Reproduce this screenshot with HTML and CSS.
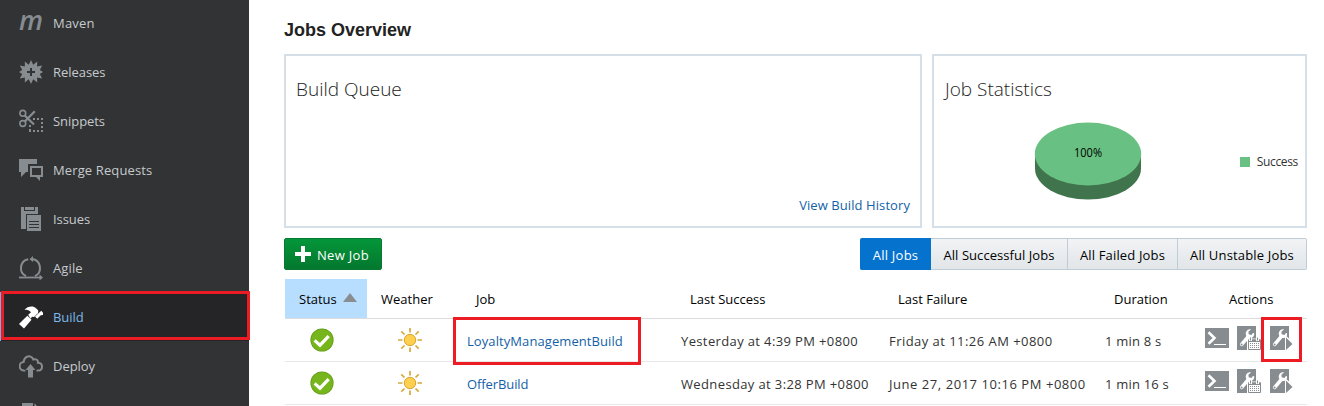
FILE: index.html
```
<!DOCTYPE html>
<html lang="en">
<head>
<meta charset="utf-8">
<title>Jobs Overview</title>
<link rel="stylesheet" href="styles.css">
</head>
<body>
<svg width="0" height="0" class="defs" aria-hidden="true">
  <symbol id="check" viewBox="0 0 24 24">
    <circle cx="12" cy="12" r="11.6" fill="#5f9a17"/>
    <circle cx="12" cy="12" r="10.8" fill="#76b51b"/>
    <path d="M4.6 12.4 10 17.2 18.7 8.2" fill="none" stroke="#fff" stroke-width="3.2"/>
  </symbol>
  <symbol id="sun" viewBox="0 0 24 24">
    <path d="M12 0v4.5M12 19.500V24M0 12h4.500M19.500 12H24M3.300 3.300l3.200 3.200M17.500 17.500l3.200 3.200M20.700 3.300l-3.200 3.200M6.500 17.500l-3.200 3.200" stroke="#d3ab3c" stroke-width="1.700" fill="none"/>
    <circle cx="12" cy="12" r="5.700" fill="#ffd04f" stroke="#d9a52e" stroke-width="1"/>
  </symbol>
  <symbol id="terminal" viewBox="0 0 24 20">
    <path d="M0 0h24v20H0z" fill="#878c90"/>
    <path d="M3.500 4.200 9.500 10l-6 5.800" fill="none" stroke="#fff" stroke-width="2.600"/>
    <path d="M9 16h12v1H9z" fill="#fff"/>
  </symbol>
  <symbol id="wrench" viewBox="0 0 19 24">
    <path d="M0 0h19v24H0z" fill="#878c90"/>
    <path d="M11 10.800 4.700 18.300" stroke="#fff" stroke-width="3.600" stroke-linecap="round" fill="none"/>
    <path d="M14.200 3.300c-3-.7-5.900 1.500-5.400 5.200l1.200 3 3 .6c2.700-.1 4.500-2.100 4.200-4.900l-1.300-.3-1.400 2-2.800-.7-.3-2.400z" fill="#fff"/>
    <circle cx="4.600" cy="18.400" r="1" fill="#878c90"/>
  </symbol>
  <symbol id="schedule" viewBox="0 0 24 24">
    <use href="#wrench" width="19" height="24"/>
    <path d="M10 12.500h14V24H10z" fill="#fff"/>
    <path d="M11.500 14h12v9.500h-12z" fill="#fff" stroke="#878c90"/>
    <path d="M11 13.500h13V16H11z" fill="#878c90"/>
    <path d="M13.500 11v4M20.500 11v4" stroke="#fff" stroke-width="3"/>
    <path d="M13.500 11.500v3M20.500 11.500v3" stroke="#878c90" stroke-width="1"/>
    <path d="M13 17.500h9.500M13 19.500h9.500M13 21.500h9.500" stroke="#878c90" stroke-dasharray="1 1"/>
  </symbol>
  <symbol id="run" viewBox="0 0 23 24">
    <use href="#wrench" width="19" height="24"/>
    <path d="M15 9.500V24h4.500l3.500-4V15l-4-3.500z" fill="#fff"/>
    <path d="M16 11.500 22.500 18 16 24z" fill="#878c90"/>
    <path d="M17 0h2v12.500l-2-2z" fill="#878c90"/>
  </symbol>
</svg>
<div class="app">
  <nav class="sidebar">
    <a class="item"><span class="m">m</span>Maven</a>
    <a class="item"><svg class="ico" viewBox="0 0 24 24"><path d="M12 0l2.200 4.700 4-3.300-.1 5.200 5.100-1-2.400 4.300L24 12l-3.200 2.100 2.400 4.300-5.100-1 .1 5.200-4-3.300L12 24l-2.200-4.700-4 3.300.1-5.200-5.100 1 2.400-4.300L0 12l3.200-2.100L.8 5.600l5.100 1-.1-5.200 4 3.300z" fill="currentColor"/><path d="M12 8v8M8 12h8" stroke="#323335" stroke-width="2"/></svg>Releases</a>
    <a class="item"><svg class="ico" viewBox="0 0 24 24"><g fill="none" stroke="currentColor"><circle cx="3.800" cy="4.300" r="2.900" stroke-width="1.600"/><circle cx="3.800" cy="14.500" r="2.900" stroke-width="1.600"/><path d="M5.800 6.500 15 15.500M5.800 12.500 15.800 2.300" stroke-width="2.300"/><path d="M14 10h10M10 22h14" stroke-width="2" stroke-dasharray="2 2"/><path d="M11 16v6M23 9v14" stroke-width="2" stroke-dasharray="2 2"/></g></svg>Snippets</a>
    <a class="item"><svg class="ico" viewBox="0 0 24 24"><path d="M0 1h18v5H9v8H7l-5 5v-5H0z" fill="currentColor"/><path d="M12 9h11v9H12z" fill="none" stroke="currentColor" stroke-width="2"/><path d="M16 18h5v5z" fill="currentColor"/></svg><span class="wide">Merge Requests</span></a>
    <a class="item"><svg class="ico" viewBox="0 0 24 24"><path d="M2 0h3v4h11V0h3v7H7v15H2z" fill="currentColor"/><path d="M6 0h9v3H6z" fill="currentColor"/><path d="M8 8h14v16H8z" fill="currentColor"/><path d="M10 14.500h10M10 17.500h10M10 20.500h10" stroke="#323335"/></svg>Issues</a>
    <a class="item"><svg class="ico" viewBox="0 0 24 24"><g fill="none" stroke="currentColor" stroke-width="2"><path d="M7 20.200A9 9 0 0 1 9.200 3.300M13 3.100a9 9 0 0 1 3 17"/><path d="M0 21.500h22" stroke-width="1.800"/></g><path d="M10.500 3.300 14 0v6zM20.500 18.500 24 21.500l-3.500 3z" fill="currentColor"/></svg><span class="wide">Agile</span></a>
    <a class="item active"><svg class="ico" viewBox="0 0 24 24"><path d="M0 19 8.300 10.800l4.200 4L5 23.500z" fill="#fff"/><path d="M9.200 9.800 12 7.300C10.500 5.200 8.500 4.300 5.500 4.800 8.200 1.500 14 .3 17 3.200l2.300 2.300-.2 2.500L15 12l-2-.2-1.500 2z" fill="#fff"/><path d="M16 11.500 22.300 5.800 24 7.800V10l-2.200.2-3.600 3.500z" fill="#fff"/></svg>Build</a>
    <a class="item"><svg class="ico" viewBox="0 0 24 24"><path d="M6.500 16.500H5.200A4.200 4.200 0 0 1 4.600 8C5 3.500 9.500.300 13 3.500c.6.500 1 1.200 1.300 2 2.900-1 5 .7 4.600 3.200C22 8.500 23 11 23 12.700c0 2.300-1.500 3.800-3.800 3.800H17.500" fill="none" stroke="currentColor" stroke-width="2"/><path d="M11.500 8.500 18 16H14v7.500H9V16H5z" fill="#323335"/><path d="M11.500 10 16.500 16H14v7.500H9V16H6.500z" fill="currentColor"/></svg>Deploy</a>
    <a class="item"><svg class="ico" viewBox="0 0 24 24"><path d="M3 0h11v8h7v16H3z M15.500 0 21 7h-5.500z" fill="currentColor"/></svg></a>
  </nav>
  <main class="main">
    <h1>Jobs Overview</h1>
    <div class="panels">
      <section class="panel queue">
        <h2>Build Queue</h2>
        <a class="link history">View Build History</a>
      </section>
      <section class="panel">
        <h2 class="stats">Job Statistics</h2>
        <div class="chart">
          <svg class="pie" viewBox="0 0 108 78"><path d="M1 32v14.500a53 31 0 0 0 106 0V32z" fill="#40744d"/><ellipse cx="54" cy="32" rx="53.200" ry="31.500" fill="#68c182"/><text x="54" y="35" text-anchor="middle" textLength="28" lengthAdjust="spacingAndGlyphs">100%</text></svg>
          <span class="legend">Success</span>
        </div>
      </section>
    </div>
    <div class="toolbar">
      <button class="new"><svg width="16" height="16" viewBox="0 0 16 16"><path d="M8 0v16M0 8h16" stroke="#fff" stroke-width="4"/></svg>New Job</button>
      <div class="filters">
        <button class="on">All Jobs</button><button class="f1">All Successful Jobs</button><button class="f2">All Failed Jobs</button><button class="f3">All Unstable Jobs</button>
      </div>
    </div>
    <div class="table">
      <div class="row head">
        <span class="sorted">Status<i class="arrow"></i></span><span class="weather">Weather</span><span>Job</span><span class="last">Last Success</span><span class="last">Last Failure</span><span>Duration</span><span class="acthead">Actions</span>
      </div>
      <div class="row">
        <span class="center"><svg width="24" height="24"><use href="#check"/></svg></span>
        <span class="center"><svg width="24" height="24"><use href="#sun"/></svg></span>
        <span class="link marked">LoyaltyManagementBuild</span>
        <span class="date">Yesterday at 4:39 PM +0800</span>
        <span class="date fri">Friday at 11:26 AM +0800</span>
        <span class="dur">1 min 8 s</span>
        <span class="actions"><svg width="24" height="20"><use href="#terminal"/></svg><svg width="24" height="24"><use href="#schedule"/></svg><b class="markedrun"><svg width="23" height="24"><use href="#run"/></svg></b></span>
      </div>
      <div class="row">
        <span class="center"><svg width="24" height="24"><use href="#check"/></svg></span>
        <span class="center"><svg width="24" height="24"><use href="#sun"/></svg></span>
        <span class="link offer">OfferBuild</span>
        <span class="date">Wednesday at 3:28 PM +0800</span>
        <span class="date june">June 27, 2017 10:16 PM +0800</span>
        <span class="dur">1 min 16 s</span>
        <span class="actions"><svg width="24" height="20"><use href="#terminal"/></svg><svg width="24" height="24"><use href="#schedule"/></svg><b><svg width="23" height="24"><use href="#run"/></svg></b></span>
      </div>
    </div>
  </main>
</div>
</body>
</html>
```
FILE: styles.css
```
*, *::before, *::after { box-sizing: border-box; }
body { margin: 0; font: 13px/20px "Open Sans", sans-serif; color: #333; background: #fff; overflow: hidden; }
svg { display: block; flex: none; }
.defs { position: absolute; }
.app { display: flex; height: 406px; overflow: hidden; }

.sidebar { width: 249px; flex: none; height: 406px; background: #323335; }
.item { display: flex; align-items: center; height: 49px; padding-left: 19px; gap: 10px; color: #c6cacd; letter-spacing: -.05px; }
.item:first-child { height: 47px; padding-bottom: 2px; letter-spacing: .2px; }
.wide { letter-spacing: .12px; }
.ico { width: 24px; height: 24px; color: #878c90; }
.m { width: 24px; font: italic 600 27px/34px "Open Sans", sans-serif; color: #878c90; letter-spacing: 0; margin-top: -5px; }
.item.active { position: relative; background: #252527; color: #7cb8ea; box-shadow: inset 1px 0 #6cb4ee; }
.item.active::after { content: ""; position: absolute; left: 1px; top: -1px; width: 249px; height: 49px; border: 3px solid #ed1c24; }

.main { width: 1023px; margin-left: 35px; }
h1 { margin: 20px 0 13px; font: bold 18px/21px "Liberation Sans", sans-serif; color: #222; }
h2 { margin: 0; font-weight: 300; font-size: 19px; line-height: 26px; color: #222; }
.stats { padding-left: 1px; }
.panels { display: grid; grid-template-columns: 638px 375px; gap: 10px; }
.panel { height: 174px; border: 2px solid #d5dfe7; padding: 20px 10px 9px; display: flex; flex-direction: column; }
.link { color: #145fa8; }
.history { margin-top: auto; align-self: flex-end; letter-spacing: .08px; }
.queue { padding-bottom: 11px; }
.chart { display: flex; justify-content: space-between; align-items: center; padding: 20px 0 0 90px; margin-right: -3px; }
.pie { width: 108px; height: 78px; font-size: 12px; }
.legend { display: flex; align-items: center; gap: 7px; font-size: 12px; letter-spacing: -.35px; padding-top: 1px; }
.legend::before { content: ""; width: 10px; height: 10px; background: #68c182; }

.toolbar { display: flex; justify-content: space-between; margin-top: 10px; height: 32px; }
button { font: inherit; border: 0; padding: 0; border-radius: 0; }
.toolbar button { padding-top: 2px; }
.new { display: flex; align-items: center; gap: 6px; width: 98px; color: #fff; background: linear-gradient(#04963a, #04782e); border: 1px solid #067a30; border-radius: 2px; letter-spacing: .3px; }
.toolbar .new { padding: 1px 0 0 10px; }
.new svg { margin-top: -1px; }
.filters { display: flex; }
.filters button { color: #000; height: 32px; border: 1px solid #c0ccd6; border-left: 0; background: linear-gradient(#f1f3f5, #e2e6e9); white-space: nowrap; }
.filters .on { width: 71px; padding-left: 1px; color: #fff; background: #0572ce; border-color: #0572ce; border-radius: 2px 0 0 2px; letter-spacing: .25px; }
.filters .f1 { width: 137px; letter-spacing: .06px; }
.filters .f2 { width: 110px; letter-spacing: .15px; }
.filters .f3 { width: 129px; letter-spacing: .17px; border-radius: 0 2px 2px 0; }

.table { margin: 9px 0 0 1px; }
.row { display: grid; grid-template-columns: 82px 87px 213px 208px 217px 99px 116px; align-items: center; height: 43px; border-bottom: 1px solid #e8e8e8; white-space: nowrap; }
.row > span { padding-left: 13px; padding-top: 2px; }
.row > .center { padding: 0; display: flex; }
.center:nth-child(1) { margin-left: 25px; }
.center:nth-child(2) { margin-left: 31px; }
.head { height: 40px; color: #000; border-color: #ddd; }
.head > span { padding-left: 22px; padding-top: 1px; }
.head > .sorted { display: flex; align-items: center; align-self: stretch; gap: 7px; padding-left: 14px; background: #b7deff; }
.head > .weather { padding-left: 14px; }
.head > .last { padding-left: 23px; }
.head > .acthead { padding-left: 38px; }
.arrow { width: 0; height: 0; border: 7px solid transparent; border-top: 0; border-bottom: 9px solid #8a8d90; margin: -4px 0 0 -1px; }
.row > .date { letter-spacing: .37px; padding-left: 14px; }
.row > .date.fri { letter-spacing: .46px; }
.row > .date.june { letter-spacing: .55px; }
.dur { letter-spacing: .2px; }
.link.offer { letter-spacing: -.1px; }
.link.marked { position: relative; letter-spacing: .08px; }
.marked::after { content: ""; position: absolute; left: -1px; top: -12px; width: 188px; height: 48px; border: 3px solid #ed1c24; }
.row > .actions { display: flex; align-items: center; gap: 8px; padding: 0 0 0 14px; margin-top: -4px; }
.actions b { position: relative; margin-left: 1px; }
.markedrun::after { content: ""; position: absolute; left: -9px; top: -9px; width: 41px; height: 45px; border: 3px solid #ed1c24; }
```
